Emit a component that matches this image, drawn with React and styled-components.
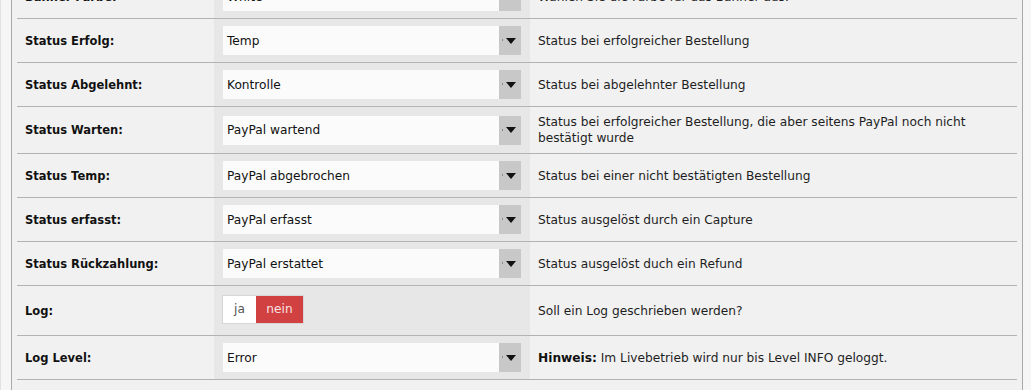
import React from "react";
import styled, { createGlobalStyle } from "styled-components";

const Global = createGlobalStyle`
  html, body { margin: 0; padding: 0; background: #f6f6f6; }
  body { font-family: "DejaVu Sans", Verdana, sans-serif; font-size: 12.2px; color: #1a1a1a; overflow: hidden; }
`;

const Page = styled.div`
  height: 390px;
  overflow: hidden;
  border-left: 1px solid #e2e2e2;
  padding-left: 10px;
  width: 1012px;
`;

const Panel = styled.div`
  margin-top: -25px;
  width: 1000px;
  padding: 0 5px;
  background: #f1f1f1;
  border-left: 1px solid #a9a9a9;
  border-right: 1px solid #a9a9a9;
  min-height: 430px;
`;

const Row = styled.div`
  display: grid;
  grid-template-columns: 197px 316px 1fr;
  border-bottom: 1px solid #b3b3b3;
  min-height: ${(p) => p.$h || 43}px;
`;

const Label = styled.div`
  display: flex;
  align-items: center;
  padding: 0 8px;
  font-weight: bold;
  font-size: 11.5px;
  color: #111;
`;

const Field = styled.div`
  display: flex;
  align-items: center;
  background: #e7e7e7;
  padding: 0 9px;
`;

const Desc = styled.div`
  display: flex;
  align-items: center;
  padding: 7px 8px;
  line-height: 16px;
  color: #1e1e1e;
  b { color: #111; }
`;

const Select = styled.div`
  flex: 1;
  height: 29px;
  display: flex;
  align-items: stretch;
  background: #fbfbfb;
`;

const SelectText = styled.div`
  flex: 1;
  display: flex;
  align-items: center;
  padding-left: 4px;
  color: #111;
`;

const Arrow = styled.div`
  width: 22px;
  background: #c8c8c8;
  display: flex;
  align-items: center;
  justify-content: center;
  position: relative;
  &::before {
    content: "";
    position: absolute;
    left: 3px;
    top: 13px;
    width: 1px;
    height: 2px;
    background: #8a8a8a;
  }
  svg { display: block; margin-left: 1px; }
`;

const Toggle = styled.div`
  display: flex;
  height: 29px;
  margin: 0 0 3px -1px;
  border: 1px solid #d6d6d6;
  box-sizing: border-box;
`;

const ToggleBtn = styled.div`
  display: flex;
  align-items: center;
  justify-content: center;
  width: ${(p) => p.$w}px;
  background: ${(p) => (p.$on ? "#d24141" : "#ffffff")};
  color: ${(p) => (p.$on ? "#f7e0e0" : "#555")};
`;

function Dropdown({ value }) {
  return (
    <Select>
      <SelectText>{value}</SelectText>
      <Arrow>
        <svg width="10" height="6" viewBox="0 0 10 6">
          <path d="M0 0H10L5 6Z" fill="#111" />
        </svg>
      </Arrow>
    </Select>
  );
}

const rows = [
  { label: "Banner Farbe:", value: "White", desc: "Wählen Sie die Farbe für das Banner aus." },
  { label: "Status Erfolg:", value: "Temp", desc: "Status bei erfolgreicher Bestellung" },
  { label: "Status Abgelehnt:", value: "Kontrolle", desc: "Status bei abgelehnter Bestellung" },
  {
    label: "Status Warten:",
    value: "PayPal wartend",
    desc: "Status bei erfolgreicher Bestellung, die aber seitens PayPal noch nicht bestätigt wurde",
    h: 46,
  },
  { label: "Status Temp:", value: "PayPal abgebrochen", desc: "Status bei einer nicht bestätigten Bestellung" },
  { label: "Status erfasst:", value: "PayPal erfasst", desc: "Status ausgelöst durch ein Capture" },
  { label: "Status Rückzahlung:", value: "PayPal erstattet", desc: "Status ausgelöst duch ein Refund" },
];

export default function App() {
  return (
    <>
      <Global />
      <Page>
        <Panel>
          {rows.map((r) => (
            <Row key={r.label} $h={r.h}>
              <Label>{r.label}</Label>
              <Field>
                <Dropdown value={r.value} />
              </Field>
              <Desc>{r.desc}</Desc>
            </Row>
          ))}
          <Row $h={49}>
            <Label>Log:</Label>
            <Field>
              <Toggle>
                <ToggleBtn $w={33}>ja</ToggleBtn>
                <ToggleBtn $w={47} $on>nein</ToggleBtn>
              </Toggle>
            </Field>
            <Desc>Soll ein Log geschrieben werden?</Desc>
          </Row>
          <Row>
            <Label>Log Level:</Label>
            <Field>
              <Dropdown value="Error" />
            </Field>
            <Desc>
              <span>
                <b>Hinweis:</b> Im Livebetrieb wird nur bis Level INFO geloggt.
              </span>
            </Desc>
          </Row>
          <Row />
        </Panel>
      </Page>
    </>
  );
}
